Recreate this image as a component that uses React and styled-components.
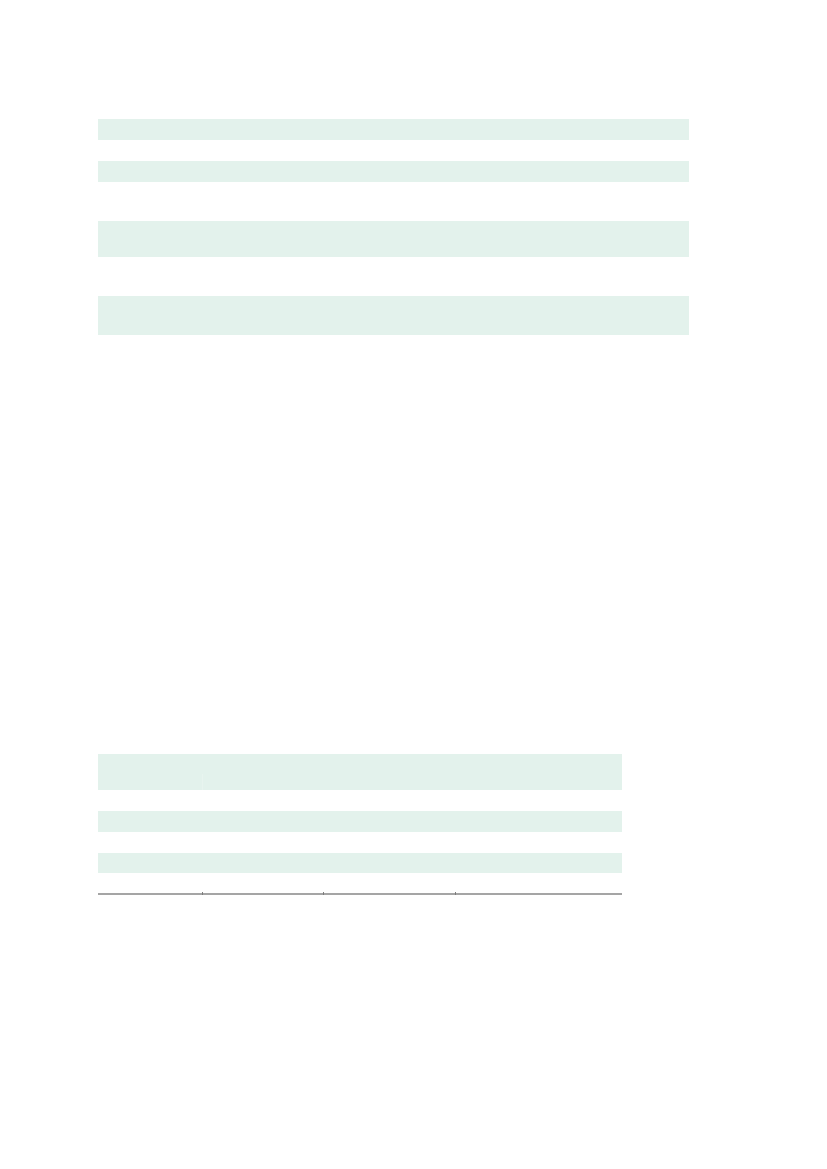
import styled, { createGlobalStyle } from "styled-components";

const GlobalStyle = createGlobalStyle`
    body {
        margin: 0;
        background: #ffffff;
        font-family: "Liberation Sans", Arial, sans-serif;
    }
`

const topColumns = [148, 98, 345];
const topRows = [20.7, 21, 20.7, 39.3, 36, 39, 39];

const bottomColumns = [105, 121, 132, 166];
const bottomRows = [21.3, 20.7, 21, 20.7, 20.7];

function Row({ height, striped, columns, last }) {
    return (
        <TableRow $striped={striped} style={{ height }}>
            {columns.map((width, index) => <Cell key={index} $tick={last && index > 0} />)}
        </TableRow>
    )
}

export default function App() {
    return (
        <>
            <GlobalStyle />
            <Page>
                <Table $width={591}>
                    <colgroup>
                        {topColumns.map((w, i) => <col key={i} style={{ width: w }} />)}
                    </colgroup>
                    <tbody>
                        {topRows.map((h, i) =>
                            <Row key={i} height={h} striped={i % 2 === 0} columns={topColumns} />
                        )}
                    </tbody>
                </Table>

                <BottomTable $width={524}>
                    <colgroup>
                        {bottomColumns.map((w, i) => <col key={i} style={{ width: w }} />)}
                    </colgroup>
                    <thead>
                        <TableRow $striped style={{ height: 20 }}>
                            <Cell colSpan={4} />
                        </TableRow>
                        <TableRow $striped style={{ height: 15.7 }}>
                            <Cell $seam />
                            <Cell colSpan={3} />
                        </TableRow>
                    </thead>
                    <tbody>
                        {bottomRows.map((h, i) =>
                            <Row
                                key={i}
                                height={h}
                                striped={i % 2 === 1}
                                columns={bottomColumns}
                                last={i === bottomRows.length - 1}
                            />
                        )}
                    </tbody>
                </BottomTable>
            </Page>
        </>
    )
}

const Page = styled.div`
    display: flex;
    flex-direction: column;
    align-items: flex-start;
    padding: 119.3px 0 0 98px;
    min-height: 1169px;
    box-sizing: border-box;
`
const Table = styled.table`
    width: ${props => props.$width}px;
    border-collapse: collapse;
    table-layout: fixed;
    border-spacing: 0;
`
const BottomTable = styled(Table)`
    margin-top: 419px;
    border-bottom: 2px solid #a5a5a5;
`
const TableRow = styled.tr`
    background: ${props => props.$striped ? "#e3f2ec" : "#ffffff"};
`
const Cell = styled.td`
    padding: 0;
    font-size: 12px;
    color: #222222;
    position: relative;
    box-shadow: ${props => props.$seam ? "inset -1px 0 0 #e8f4ef" : "none"};

    &::after {
        content: "";
        display: ${props => props.$tick ? "block" : "none"};
        position: absolute;
        left: -1px;
        bottom: -2px;
        width: 1px;
        height: 3px;
        background: #7c7c7c;
    }
`
